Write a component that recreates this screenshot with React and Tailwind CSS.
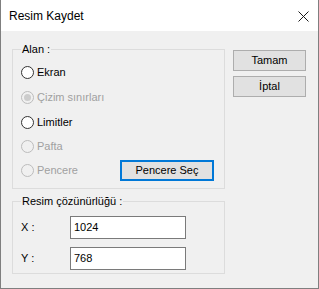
import React from "react";

function Radio({ label, checked = false, disabled = false }) {
  return (
    <div className="flex items-center">
      <span
        className={
          "w-[13px] h-[13px] rounded-full border flex items-center justify-center shrink-0 " +
          (disabled ? "border-[#bcbcbc] bg-[#f0f0f0]" : "border-[#333333] bg-white")
        }
      >
        {checked && (
          <span className={"w-[7px] h-[7px] rounded-full " + (disabled ? "bg-[#cccccc]" : "bg-[#333333]")} />
        )}
      </span>
      <span className={"ml-[3px] " + (disabled ? "text-[#a0a0a0]" : "text-black")}>{label}</span>
    </div>
  );
}

function Button({ children, focused = false, className = "" }) {
  return (
    <div
      className={
        "h-[21px] flex items-center justify-center bg-[#e1e1e1] text-black " +
        (focused ? "border-2 border-[#0078d7] " : "border border-[#adadad] ") +
        className
      }
    >
      {children}
    </div>
  );
}

export default function App() {
  return (
    <div className="w-[319px] h-[289px] flex flex-col border-x border-b border-[#7f7f7f] font-['Liberation_Sans',Arial,sans-serif] text-[11px] text-black">
      <div className="h-[31px] shrink-0 bg-white flex items-center justify-between pl-[8px] pr-[9px]">
        <span className="text-[12px] leading-none">Resim Kaydet</span>
        <svg width="11" height="11" viewBox="0 0 11 11" className="mt-[1px]">
          <path d="M0.5 0.5 L10.5 10.5 M10.5 0.5 L0.5 10.5" stroke="#1a1a1a" strokeWidth="1" fill="none" />
        </svg>
      </div>
      <div className="flex-1 bg-[#f0f0f0] flex pl-[11px]">
        <div className="w-[213px] flex flex-col">
          <fieldset className="mt-[12px] h-[146px] border border-[#dcdcdc] m-0 p-0 min-w-0">
            <legend className="ml-[8px] px-[1px] leading-[13px]">Alan :</legend>
            <div className="flex flex-col pl-[8px] pr-[10px] pt-[4px]">
              <div className="h-[25px] flex items-center">
                <Radio label="Ekran" />
              </div>
              <div className="h-[25px] flex items-center">
                <Radio label="Çizim sınırları" checked disabled />
              </div>
              <div className="h-[24px] flex items-center">
                <Radio label="Limitler" />
              </div>
              <div className="h-[24px] flex items-center">
                <Radio label="Pafta" disabled />
              </div>
              <div className="h-[24px] flex items-center justify-between">
                <Radio label="Pencere" disabled />
                <Button focused className="w-[94px]">Pencere Seç</Button>
              </div>
            </div>
          </fieldset>
          <fieldset className="mt-[6px] h-[79px] border border-[#dcdcdc] m-0 p-0 min-w-0">
            <legend className="ml-[8px] px-[1px] leading-[13px]">Resim çözünürlüğü :</legend>
            <div className="flex flex-col gap-[8px] pl-[8px] pt-[8px]">
              <div className="flex items-center">
                <span className="w-[49px]">X :</span>
                <div className="w-[116px] h-[23px] border border-[#7a7a7a] bg-white flex items-center pl-[3px]">1024</div>
              </div>
              <div className="flex items-center">
                <span className="w-[49px]">Y :</span>
                <div className="w-[116px] h-[23px] border border-[#7a7a7a] bg-white flex items-center pl-[3px]">768</div>
              </div>
            </div>
          </fieldset>
        </div>
        <div className="ml-[8px] mt-[19px] flex flex-col gap-[5px]">
          <Button className="w-[73px]">Tamam</Button>
          <Button className="w-[73px]">İptal</Button>
        </div>
      </div>
    </div>
  );
}
